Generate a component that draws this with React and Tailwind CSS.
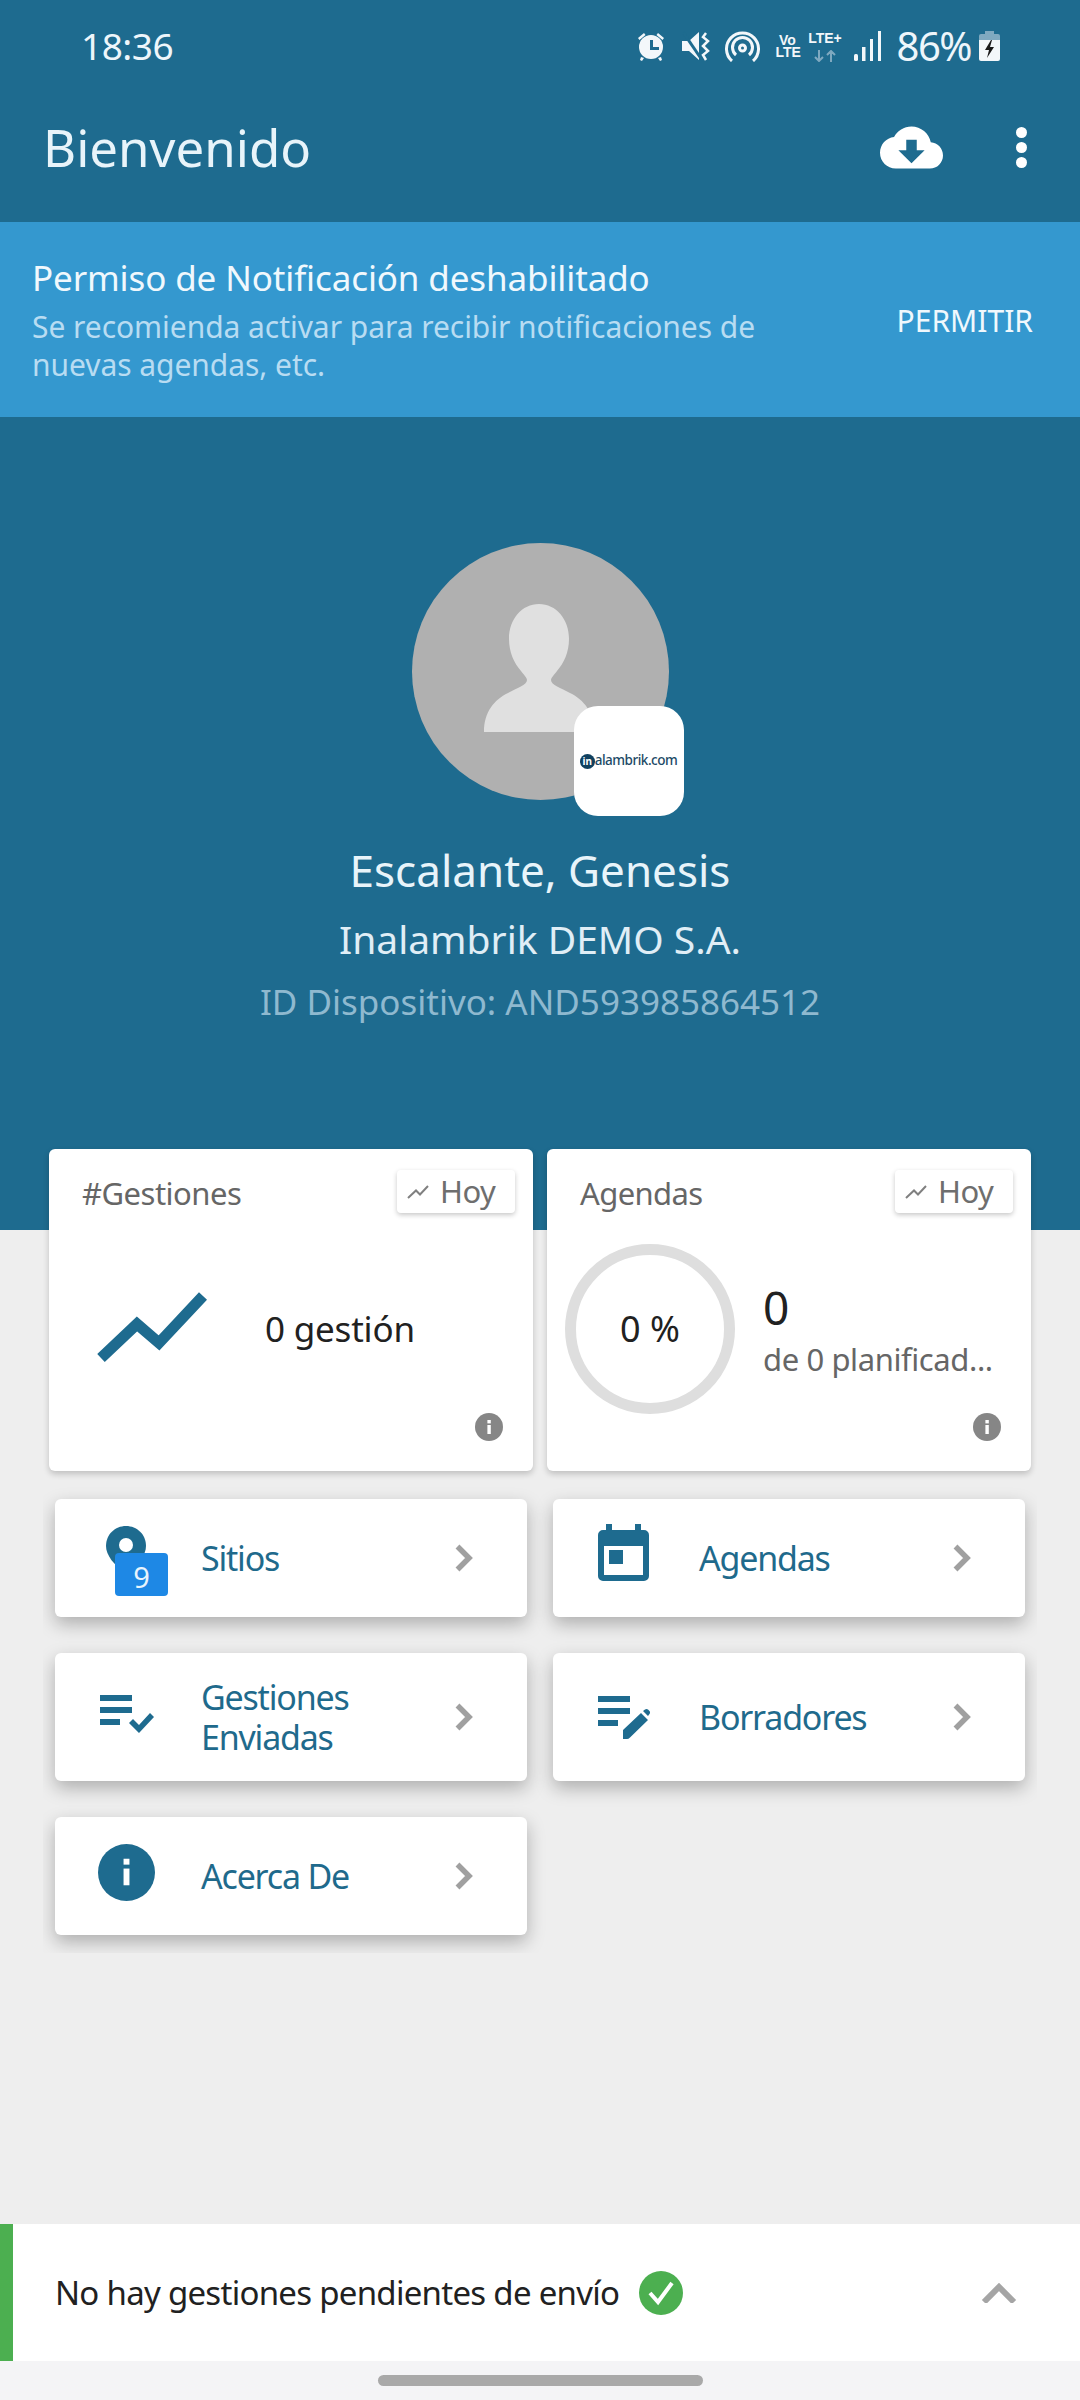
const TEAL = "#1e6b8f";

const SmallTrend = () => (
  <svg width="24" height="18" viewBox="0 0 24 18" fill="none">
    <path d="M2 15 L10 7.5 L14 11.5 L22 3" stroke="#808080" strokeWidth="2" />
  </svg>
);

const HoyChip = () => (
  <div className="flex h-[43px] w-[118px] items-center gap-[10px] rounded-[4px] bg-white pl-[9px] text-[31px] text-[#6e6e6e] shadow-[0_2px_5px_rgba(0,0,0,0.22)]">
    <SmallTrend />
    <span className="tracking-[-0.5px]">Hoy</span>
  </div>
);

const InfoDot = () => (
  <svg width="28" height="28" viewBox="0 0 28 28" className="absolute bottom-[30px] right-[30px]">
    <circle cx="14" cy="14" r="14" fill="#868686" />
    <rect x="12.4" y="12" width="3.4" height="9" fill="#fff" />
    <rect x="12.4" y="7" width="3.4" height="3.4" fill="#fff" />
  </svg>
);

const Chevron = () => (
  <svg width="18" height="28" viewBox="0 0 18 28" fill="none" className="mr-[54px] shrink-0">
    <path d="M2.500 2.500L14 14 2.500 25.500" stroke="#a0a0a0" strokeWidth="5.500" />
  </svg>
);

const PinIcon = () => (
  <div className="relative ml-[6px] h-[70px] w-[62px] translate-y-[3px]">
    <svg width="40" height="46" viewBox="0 0 40 46" className="absolute left-0 top-0">
      <path d="M20 0C9 0 0 8.500 0 20c0 9 8 20 20 26 12-6 20-17 20-26C40 8.500 31 0 20 0z" fill={TEAL} />
      <circle cx="20" cy="19" r="7" fill="#fff" />
    </svg>
    <div className="absolute bottom-0 left-[9px] flex h-[43px] w-[53px] items-center justify-center rounded-[4px] bg-[#1e88e5] pt-[4px] text-[29px] leading-none text-[#e8f4fd]">
      9
    </div>
  </div>
);

const CalendarIcon = () => (
  <svg width="52" height="57" viewBox="0 0 52 57" fill={TEAL}>
    <rect x="8" y="0" width="6" height="10" />
    <rect x="37" y="0" width="6" height="10" />
    <path d="M5 6h41a5 5 0 0 1 5 5v41a5 5 0 0 1-5 5H5a5 5 0 0 1-5-5V11a5 5 0 0 1 5-5zm1 16v29h39V22z" fillRule="evenodd" />
    <rect x="11" y="26" width="14" height="14" />
  </svg>
);

const ListCheckIcon = () => (
  <svg width="54" height="38" viewBox="0 0 54 38" fill={TEAL}>
    <rect x="0" y="0" width="32" height="6" />
    <rect x="0" y="12" width="32" height="6" />
    <rect x="0" y="24" width="20" height="6" />
    <path d="M29 28l4-4 6 6 11-12 4 4-15 16z" />
  </svg>
);

const ListEditIcon = () => (
  <svg width="52" height="43" viewBox="0 0 52 43" fill={TEAL}>
    <rect x="0" y="0" width="32" height="6" />
    <rect x="0" y="12" width="32" height="6" />
    <rect x="0" y="24" width="20" height="6" />
    <path d="M25 34L43 17l7 7-18 17.500c-1 1-2 1.500-3 1.500h-4z" />
    <path d="M45 15l2-1.500c1-.7 2-.7 3 0l1.500 1.500c.8 1 .8 2 0 3L50 20z" />
  </svg>
);

const InfoIcon = () => (
  <svg width="57" height="57" viewBox="0 0 58 58" className="-ml-[2px]">
    <circle cx="29" cy="29" r="29" fill={TEAL} />
    <rect x="26" y="25" width="6" height="17" fill="#fff" />
    <rect x="26" y="15" width="6" height="6" fill="#fff" />
  </svg>
);

const MenuCard = ({ icon, lines, h = "h-[118px]", iconLift = "" }) => (
  <div className={`flex ${h} items-center rounded-[6px] bg-white shadow-[0_7px_18px_rgba(0,0,0,0.27)]`}>
    <div className={`flex w-[146px] shrink-0 pl-[45px] ${iconLift}`}>{icon}</div>
    <div className="flex-1 text-[34px] leading-[40px] tracking-[-1.2px] text-[#1f6a8c]">
      {lines.map((l) => (
        <div key={l}>{l}</div>
      ))}
    </div>
    <Chevron />
  </div>
);

const StatusIcons = () => (
  <div className="flex items-center text-white">
    {/* alarma */}
    <svg width="30" height="30" viewBox="0 0 30 30" className="mr-[16px]">
      <circle cx="15" cy="16" r="12" fill="#f3f7fa" />
      <path d="M2 7l6-5 1.500 2-6 5zM28 7l-6-5-1.500 2 6 5zM5 26l3 1-2 3-2-1zM25 26l-3 1 2 3 2-1z" fill="#f3f7fa" />
      <path d="M14 9h3v7h6v3h-9z" fill={TEAL} />
    </svg>
    {/* silencio + vibrar */}
    <svg width="30" height="30" viewBox="0 0 30 30" className="mr-[13px]">
      <path d="M0 10h7l10-9v28L7 20H0z" fill="#f3f7fa" />
      <path d="M1 1l19 28" stroke={TEAL} strokeWidth="3" />
      <path d="M24 2l-3 4 5 4-5 5 5 5-5 4 3 5" fill="none" stroke="#f3f7fa" strokeWidth="2.500" />
    </svg>
    {/* hotspot */}
    <svg width="35" height="31" viewBox="0 0 35 31" fill="none" stroke="#f3f7fa" strokeWidth="3" className="mr-[16px]">
      <path d="M7 30a16 16 0 1 1 21 0" />
      <path d="M11 24a10 10 0 1 1 13 0" />
      <circle cx="17.500" cy="17" r="3" />
    </svg>
    <div className="mr-[7px] w-[24px] text-center font-['Liberation_Sans',sans-serif] text-[14px] font-bold leading-[12px] text-[#f3f7fa]">
      <div>Vo</div>
      <div>LTE</div>
    </div>
    <div className="mr-[10px] flex w-[37px] flex-col items-center font-['Liberation_Sans',sans-serif] text-[14px] font-bold leading-[14px] text-[#f3f7fa]">
      <div>LTE+</div>
      <svg width="24" height="12" viewBox="0 0 24 12" fill="none" stroke="#7fa9c0" strokeWidth="2" className="mt-[5px]">
        <path d="M6 0v11M2 7l4 4 4-4M18 12V1M14 5l4-4 4 4" />
      </svg>
    </div>
    {/* señal */}
    <svg width="28" height="30" viewBox="0 0 28 30" fill="#f3f7fa" className="mr-[15px]">
      <rect x="0" y="23" width="4" height="7" rx="1.500" />
      <rect x="8" y="16" width="3.500" height="14" />
      <rect x="16" y="8" width="3" height="22" />
      <rect x="24" y="0" width="3" height="30" />
    </svg>
    <span className="mr-[8px] text-[40px] leading-none tracking-[-1.500px] text-[#eef6fb]">86%</span>
    {/* batería */}
    <svg width="21" height="30" viewBox="0 0 21 30">
      <rect x="6" y="0" width="9" height="4" fill="#7fa9c0" />
      <rect x="0" y="3" width="21" height="8" rx="2" fill="#7fa9c0" />
      <path d="M0 9h21v19a2 2 0 0 1-2 2H2a2 2 0 0 1-2-2z" fill="#f3f7fa" />
      <path d="M12 9l-6 10h4l-2 8 7-11h-4l2-7z" fill="#1a1a1a" />
    </svg>
  </div>
);

export default function App() {
  return (
    <div className="flex min-h-[2400px] w-[1080px] flex-col bg-[#eeeeee] font-['Noto_Sans',sans-serif]">
      {/* Cabecera azul */}
      <div className="h-[1230px] bg-[#1e6b8f]">
        <div className="flex h-[92px] items-center justify-between pl-[81px] pr-[80px]">
          <span className="text-[37px] tracking-[-0.5px] text-[#eef6fb]">18:36</span>
          <StatusIcons />
        </div>
        <div className="flex h-[130px] items-center justify-between pb-[20px] pl-[43px] pr-[53px]">
          <span className="text-[51px] text-[#e8f4fa]">Bienvenido</span>
          <div className="flex items-center gap-[73px]">
            <svg width="63" height="63" viewBox="0 0 24 24" fill="#fff">
              <path d="M19.35 10.04C18.67 6.59 15.64 4 12 4 9.110 4 6.600 5.640 5.350 8.040 2.340 8.360 0 10.910 0 14c0 3.310 2.690 6 6 6h13c2.760 0 5-2.240 5-5 0-2.640-2.050-4.780-4.650-4.960zM17 13l-5 5-5-5h3V9h4v4h3z" />
            </svg>
            <div className="flex flex-col gap-[4px]">
              <div className="h-[11px] w-[11px] rounded-full bg-white" />
              <div className="h-[11px] w-[11px] rounded-full bg-white" />
              <div className="h-[11px] w-[11px] rounded-full bg-white" />
            </div>
          </div>
        </div>

        {/* Aviso de permiso */}
        <div className="flex h-[195px] items-center justify-between bg-[#3498cf] pl-[32px] pr-[47px]">
          <div>
            <div className="text-[35px] leading-[44px] tracking-[-0.12px] text-[#f0f8fd]">Permiso de Notificación deshabilitado</div>
            <div className="mt-[8px] w-[760px] text-[30px] leading-[38px] tracking-[-0.05px] text-[#b8dcf2]">
              Se recomienda activar para recibir notificaciones de nuevas agendas, etc.
            </div>
          </div>
          <span className="mt-[1px] text-[30px] text-[#f0f8fd]">PERMITIR</span>
        </div>

        {/* Perfil */}
        <div className="flex flex-col items-center pt-[126px]">
          <div className="relative h-[257px] w-[257px]">
            <svg width="257" height="257" viewBox="0 0 257 257">
              <circle cx="128.500" cy="128.500" r="128.500" fill="#b0b0b0" />
              <path
                d="M72 189c0-20 10-32 24-39 9-5 19-8 19-13 0-2-3-5-6-9-7-8-12-19-12-32 0-20 13-35 30-35s30 15 30 35c0 13-5 24-12 32-3 4-6 7-6 9 0 5 10 8 19 13 14 7 24 19 24 39z"
                fill="#e0e0e0"
              />
            </svg>
            <div className="absolute left-[162px] top-[163px] flex h-[110px] w-[110px] items-center justify-center rounded-[24px] bg-white">
              <div className="flex h-[15px] w-[15px] items-center justify-center rounded-full bg-[#10405f] text-[10px] font-bold leading-none text-white">
                in
              </div>
              <span className="text-[13.500px] font-medium leading-none tracking-[-0.5px] text-[#1d4a66]">alambrik.com</span>
            </div>
          </div>
          <div className="mt-[40px] text-[44px] leading-[60px] text-[#e8f4fa]">Escalante, Genesis</div>
          <div className="mt-[13px] text-[39px] leading-[52px] text-[#e0eef6]">Inalambrik DEMO S.A.</div>
          <div className="mt-[12px] text-[35px] leading-[50px] text-[#8fb9cf]">ID Dispositivo: AND593985864512</div>
        </div>
      </div>

      {/* Tarjetas que montan sobre la cabecera */}
      <div className="mt-[-81px] grid grid-cols-2 gap-[14px] px-[49px]">
        <div className="relative h-[322px] rounded-[6px] bg-white shadow-[0_3px_6px_rgba(0,0,0,0.2)]">
          <div className="flex items-start justify-between pl-[33px] pr-[18px] pt-[21px]">
            <span className="pt-[1px] text-[31px] leading-[44px] tracking-[-0.5px] text-[#666666]">#Gestiones</span>
            <HoyChip />
          </div>
          <div className="flex items-center pt-[76px]">
            <svg width="110" height="72" viewBox="0 0 110 72" fill="none" className="ml-[48px]">
              <path d="M4 67L40 33 62 52 106 5" stroke={TEAL} strokeWidth="11" />
            </svg>
            <span className="ml-[58px] mt-[4px] text-[35px] tracking-[-0.2px] text-[#212121]">0 gestión</span>
          </div>
          <InfoDot />
        </div>
        <div className="relative h-[322px] rounded-[6px] bg-white shadow-[0_3px_6px_rgba(0,0,0,0.2)]">
          <div className="flex items-start justify-between pl-[33px] pr-[18px] pt-[21px]">
            <span className="pt-[1px] text-[31px] leading-[44px] tracking-[-0.6px] text-[#666666]">Agendas</span>
            <HoyChip />
          </div>
          <div className="flex items-center pl-[18px] pt-[29px]">
            <div className="flex h-[170px] w-[170px] shrink-0 items-center justify-center rounded-full border-[11px] border-[#dedede] text-[36px] text-[#212121]">
              0 %
            </div>
            <div className="ml-[28px]">
              <div className="text-[46px] leading-[60px] text-[#212121]">0</div>
              <div className="text-[31px] leading-[44px] tracking-[-0.4px] text-[#666666]">de 0 planificad...</div>
            </div>
          </div>
          <InfoDot />
        </div>
      </div>

      {/* Accesos */}
      <div className="flex flex-col gap-[36px] overflow-hidden pb-[18px] pl-[12px] pr-[12px] pt-[28px] ml-[43px] mr-[43px]">
        <div className="grid grid-cols-2 gap-[26px]">
          <MenuCard icon={<PinIcon />} lines={["Sitios"]} />
          <MenuCard icon={<CalendarIcon />} lines={["Agendas"]} iconLift="-translate-y-[6px]" />
        </div>
        <div className="grid grid-cols-2 gap-[26px]">
          <MenuCard h="h-[128px]" icon={<ListCheckIcon />} lines={["Gestiones", "Enviadas"]} iconLift="-translate-y-[3px]" />
          <MenuCard h="h-[128px]" icon={<ListEditIcon />} lines={["Borradores"]} />
        </div>
        <div className="grid grid-cols-2 gap-[26px]">
          <MenuCard icon={<InfoIcon />} lines={["Acerca De"]} iconLift="-translate-y-[4px]" />
        </div>
      </div>

      <div className="flex-1" />

      {/* Barra inferior */}
      <div className="flex h-[137px] items-center border-l-[13px] border-[#4caf50] bg-white">
        <span className="ml-[42px] text-[33px] tracking-[-0.72px] text-[#212121]">No hay gestiones pendientes de envío</span>
        <svg width="44" height="44" viewBox="0 0 44 44" className="ml-[20px]">
          <circle cx="22" cy="22" r="22" fill="#4caf50" />
          <path d="M11 22l8 9 14-19" fill="none" stroke="#fff" strokeWidth="4" />
        </svg>
        <svg width="36" height="20" viewBox="0 0 36 20" fill="none" stroke="#a5a5a5" strokeWidth="6" className="ml-auto mr-[63px]">
          <path d="M3 19L18 4l15 15" />
        </svg>
      </div>
      <div className="flex h-[39px] justify-center bg-[#f4f4f6] pt-[14px]">
        <div className="h-[11px] w-[325px] rounded-full bg-[#a9a9a9]" />
      </div>
    </div>
  );
}
